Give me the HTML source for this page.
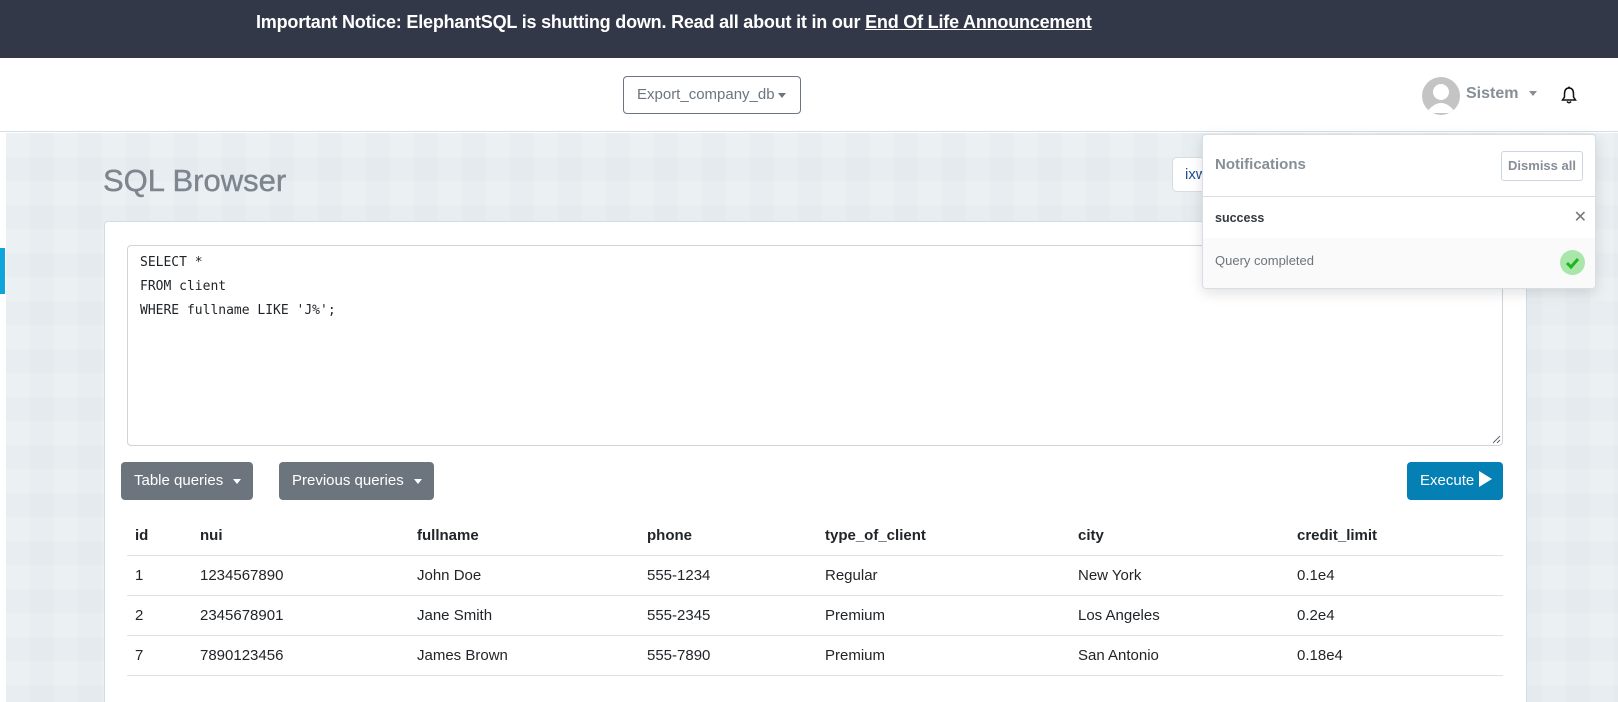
<!DOCTYPE html>
<html><head><meta charset="utf-8"><style>
*{box-sizing:border-box;margin:0;padding:0}
html,body{width:1618px;height:702px;overflow:hidden}
body{font-family:"Liberation Sans",sans-serif;background:#fff;position:relative;color:#212529}
.banner{position:absolute;left:0;top:0;width:1618px;height:58px;background:#323847;color:#fff;font-weight:bold;font-size:18px;line-height:44px}
.banner span{position:absolute;left:256px;top:0;letter-spacing:-0.2px}
.nav{position:absolute;left:0;top:58px;width:1618px;height:74px;background:#fff;border-bottom:1px solid #d6dee6}
.db{position:absolute;left:623px;top:18px;width:178px;height:38px;border:1px solid #6c757d;border-radius:4px;font-size:15px;color:#6c757d;line-height:36px;padding-left:13px}
.caret{display:inline-block;width:0;height:0;border-left:4px solid transparent;border-right:4px solid transparent;border-top:5px solid currentColor;vertical-align:middle;margin-left:3px}
.avatar{position:absolute;left:1422px;top:19px;width:38px;height:38px;border-radius:50%;background:#c4c4c4;overflow:hidden}
.sistem{position:absolute;left:1466px;top:27px;font-size:16px;color:#868e96;font-weight:bold}
.content{position:absolute;left:6px;top:133px;width:1612px;height:569px;background:#e4eaee;
background-image:linear-gradient(90deg,rgba(255,255,255,.15) 50%,transparent 50%),linear-gradient(rgba(255,255,255,.12) 50%,transparent 50%);background-size:48px 48px,48px 48px}
.bluebar{position:absolute;left:0;top:248px;width:5px;height:46px;background:#0ea5db}
h1{position:absolute;left:103px;top:163px;font-size:31px;font-weight:normal;color:#7f858e;-webkit-text-stroke:0.4px #7f858e}
.ixw{position:absolute;left:1172px;top:157px;width:80px;height:35px;background:#fff;border:1px solid #d6dce2;border-radius:5px;font-size:15px;line-height:33px;padding-left:12px;color:#1d4f8c}
.card{position:absolute;left:104px;top:221px;width:1423px;height:481px;background:#fff;border:1px solid #d3dce5;border-bottom:none;border-radius:4px 4px 0 0}
.ta{position:absolute;left:127px;top:245px;width:1376px;height:201px;border:1px solid #ced4da;border-radius:4px;font-family:"DejaVu Sans Mono","Liberation Mono",monospace;font-size:13px;line-height:24px;padding:5px 12px;color:#212529}
.btn{position:absolute;top:462px;height:38px;border-radius:4px;background:#6c757d;color:#fff;font-size:15px;line-height:38px;padding-left:13px}
.exec{position:absolute;left:1407px;top:462px;width:96px;height:38px;border-radius:4px;background:#0480b4;color:#fff;font-size:15px;line-height:38px;padding-left:13px}
table{position:absolute;left:127px;top:516px;width:1376px;border-collapse:collapse;font-size:15px}
th{text-align:left;font-weight:bold;height:39px;border-bottom:1px solid #dee2e6;padding:0;vertical-align:middle}
td{height:40px;border-bottom:1px solid #dee2e6;padding:0}
.notif{position:absolute;left:1202px;top:134px;width:394px;height:155px;background:#fff;border:1px solid #d6dee6;border-radius:4px;box-shadow:0 4px 14px rgba(0,0,0,.12);overflow:hidden}
.nh{height:62px;border-bottom:1px solid #d6dee6;position:relative}
.nh .t{position:absolute;left:12px;top:21px;font-size:15px;color:#868e96;font-weight:bold}
.dis{position:absolute;right:12px;top:16px;width:82px;height:30px;border:1px solid #cdd6e0;border-radius:3px;font-size:13px;color:#868e96;font-weight:bold;line-height:28px;text-align:center}
.s{height:41px;position:relative}
.s .t{position:absolute;left:12px;top:14px;font-size:12.5px;font-weight:bold;color:#343a40}
.s .x{position:absolute;right:8px;top:10px;font-size:16px;color:#777}
.q{height:52px;background:#fafafa;position:relative}
.q .t{position:absolute;left:12px;top:15px;font-size:13px;color:#6c757d}
.chk{position:absolute;left:357px;top:12px;width:25px;height:25px;border-radius:50%;background:#a9e6a9}
</style></head><body>
<div class="banner"><span>Important Notice: ElephantSQL is shutting down. Read all about it in our <u>End Of Life Announcement</u></span></div>
<div class="nav">
 <div class="db">Export_company_db<span class="caret"></span></div>
 <div class="avatar"><svg width="38" height="38"><circle cx="19" cy="15" r="8" fill="#fff"/><path d="M4 36 Q19 16 34 36Z" fill="#fff"/></svg></div>
 <div class="sistem">Sistem <span class="caret" style="margin-left:6px"></span></div>
 <svg style="position:absolute;left:1561px;top:28px" width="16" height="18" viewBox="0 0 16 18"><path d="M8 2 C4.5 2 3.5 5 3.5 8 L3.5 11 L1.5 14 L14.5 14 L12.5 11 L12.5 8 C12.5 5 11.5 2 8 2Z" fill="none" stroke="#111" stroke-width="1.5"/><path d="M6 15.5 Q8 18 10 15.5" fill="none" stroke="#111" stroke-width="1.5"/><circle cx="8" cy="1.5" r="1" fill="#111"/></svg>
</div>
<div class="content"></div>
<div class="bluebar"></div>
<h1>SQL Browser</h1>
<div class="ixw">ixw</div>
<div class="card"></div>
<div class="ta">SELECT *<br>FROM client<br>WHERE fullname LIKE 'J%';</div>
<svg style="position:absolute;left:1492px;top:435px" width="9" height="9"><path d="M1 8 L8 1 M5 8 L8 5" stroke="#666" stroke-width="1"/></svg>
<div class="btn" style="left:121px;width:132px">Table queries <span class="caret" style="margin-left:6px"></span></div>
<div class="btn" style="left:279px;width:155px">Previous queries <span class="caret" style="margin-left:6px"></span></div>
<div class="exec">Execute <svg width="14" height="16" style="vertical-align:-2px"><path d="M1 0 L14 8 L1 16Z" fill="#fff"/></svg></div>
<table>
<colgroup><col style="width:73px"><col style="width:217px"><col style="width:230px"><col style="width:178px"><col style="width:253px"><col style="width:219px"><col></colgroup>
<tr><th style="padding-left:8px">id</th><th>nui</th><th>fullname</th><th>phone</th><th>type_of_client</th><th>city</th><th>credit_limit</th></tr>
<tr><td style="padding-left:8px">1</td><td>1234567890</td><td>John Doe</td><td>555-1234</td><td>Regular</td><td>New York</td><td>0.1e4</td></tr>
<tr><td style="padding-left:8px">2</td><td>2345678901</td><td>Jane Smith</td><td>555-2345</td><td>Premium</td><td>Los Angeles</td><td>0.2e4</td></tr>
<tr><td style="padding-left:8px">7</td><td>7890123456</td><td>James Brown</td><td>555-7890</td><td>Premium</td><td>San Antonio</td><td>0.18e4</td></tr>
</table>
<div class="notif">
 <div class="nh"><span class="t">Notifications</span><div class="dis">Dismiss all</div></div>
 <div class="s"><span class="t">success</span><span class="x">✕</span></div>
 <div class="q"><span class="t">Query completed</span><div class="chk"><svg width="25" height="25"><path d="M7 13 L11 17 L18 9" fill="none" stroke="#1fb51f" stroke-width="3"/></svg></div></div>
</div>
</body></html>
